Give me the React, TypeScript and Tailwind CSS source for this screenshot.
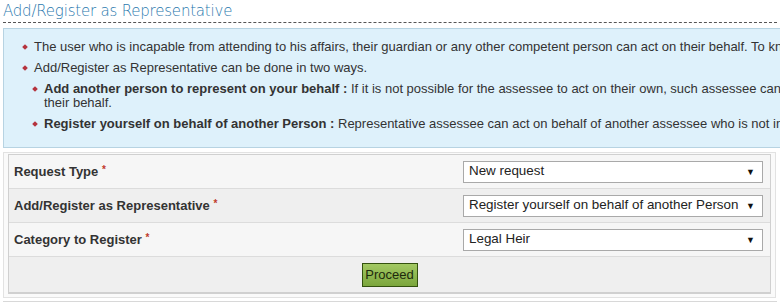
import React from "react";

const notes = [
  {
    level: 0,
    bold: "",
    lines: [
      "The user who is incapable from attending to his affairs, their guardian or any other competent person can act on their behalf. To know more, refer the user manual.",
    ],
  },
  {
    level: 0,
    bold: "",
    lines: ["Add/Register as Representative can be done in two ways."],
  },
  {
    level: 1,
    bold: "Add another person to represent on your behalf : ",
    lines: [
      "If it is not possible for the assessee to act on their own, such assessee can add another person as representative to act on",
      "their behalf.",
    ],
  },
  {
    level: 1,
    bold: "Register yourself on behalf of another Person : ",
    lines: ["Representative assessee can act on behalf of another assessee who is not in a position to act on his own."],
  },
];

const fields = [
  { label: "Request Type", value: "New request", bg: "bg-[#f6f6f6]" },
  { label: "Add/Register as Representative", value: "Register yourself on behalf of another Person", bg: "bg-[#efefef]" },
  { label: "Category to Register", value: "Legal Heir", bg: "bg-[#f6f6f6]" },
];

function Bullet() {
  return <span className="mt-[5px] mr-[7px] inline-block h-[4px] w-[4px] shrink-0 rotate-45 bg-[#b5333d]" />;
}

export default function App() {
  return (
    <div className="h-[307px] w-[780px] overflow-hidden bg-white font-['Liberation_Sans',Arial,sans-serif] text-[13px] text-[#333]">
      <div className="px-[3px] pt-[3px]">
        {/* Title */}
        <h1 className="border-b border-dashed border-[#555] pb-[2px] font-['DejaVu_Sans',sans-serif] text-[15px] leading-[17px] font-light tracking-[-0.2px] text-[#2a78ad]">
          Add/Register as Representative
        </h1>

        {/* Info box */}
        <div className="mt-[5px] w-[1240px] border border-[#b7d3e2] bg-[#def1fb] pt-[11px] pb-[16px] pl-[19px]">
          <ul className="flex flex-col gap-[7px]">
            {notes.map((n, i) => (
              <li key={i} className={`flex items-start leading-[14px] ${n.level ? "pl-[10px]" : ""}`}>
                <Bullet />
                <span>
                  {n.bold && <b>{n.bold}</b>}
                  {n.lines.map((l, j) => (
                    <React.Fragment key={j}>
                      {j > 0 && <br />}
                      {l}
                    </React.Fragment>
                  ))}
                </span>
              </li>
            ))}
          </ul>
        </div>

        {/* Form panel */}
        <div className="mt-[4px] mr-[1px] border border-[#e2e2e2] bg-[#fafafa] px-[4px] pt-[1px] pb-[3px]">
          <div className="border border-b-2 border-[#d0d0d0]">
            {fields.map((f) => (
              <div key={f.label} className={`flex h-[34px] items-center border-b border-[#dcdcdc] ${f.bg}`}>
                <div className="w-[454px] pl-[5px] font-bold">
                  {f.label} <span className="align-top text-[10px] text-[#c0392b]">*</span>
                </div>
                <div className="relative flex h-[22px] w-[300px] items-center border border-[#a9a9a9] bg-white pl-[5px] text-[13.4px] text-[#222]">
                  {f.value}
                  <span className="absolute top-[4px] right-[7px] text-[9px] text-[#111]">▼</span>
                </div>
              </div>
            ))}
            <div className="flex h-[35px] items-center justify-center bg-[#efefef]">
              <button className="h-[24px] w-[56px] border border-[#34520f] bg-gradient-to-b from-[#a3c963] to-[#7ba63c] text-[13px] text-[#1d2a0c]">
                Proceed
              </button>
            </div>
          </div>
        </div>
        <div className="mt-[3px] border-t border-[#d8d8d8]" />
      </div>
    </div>
  );
}
